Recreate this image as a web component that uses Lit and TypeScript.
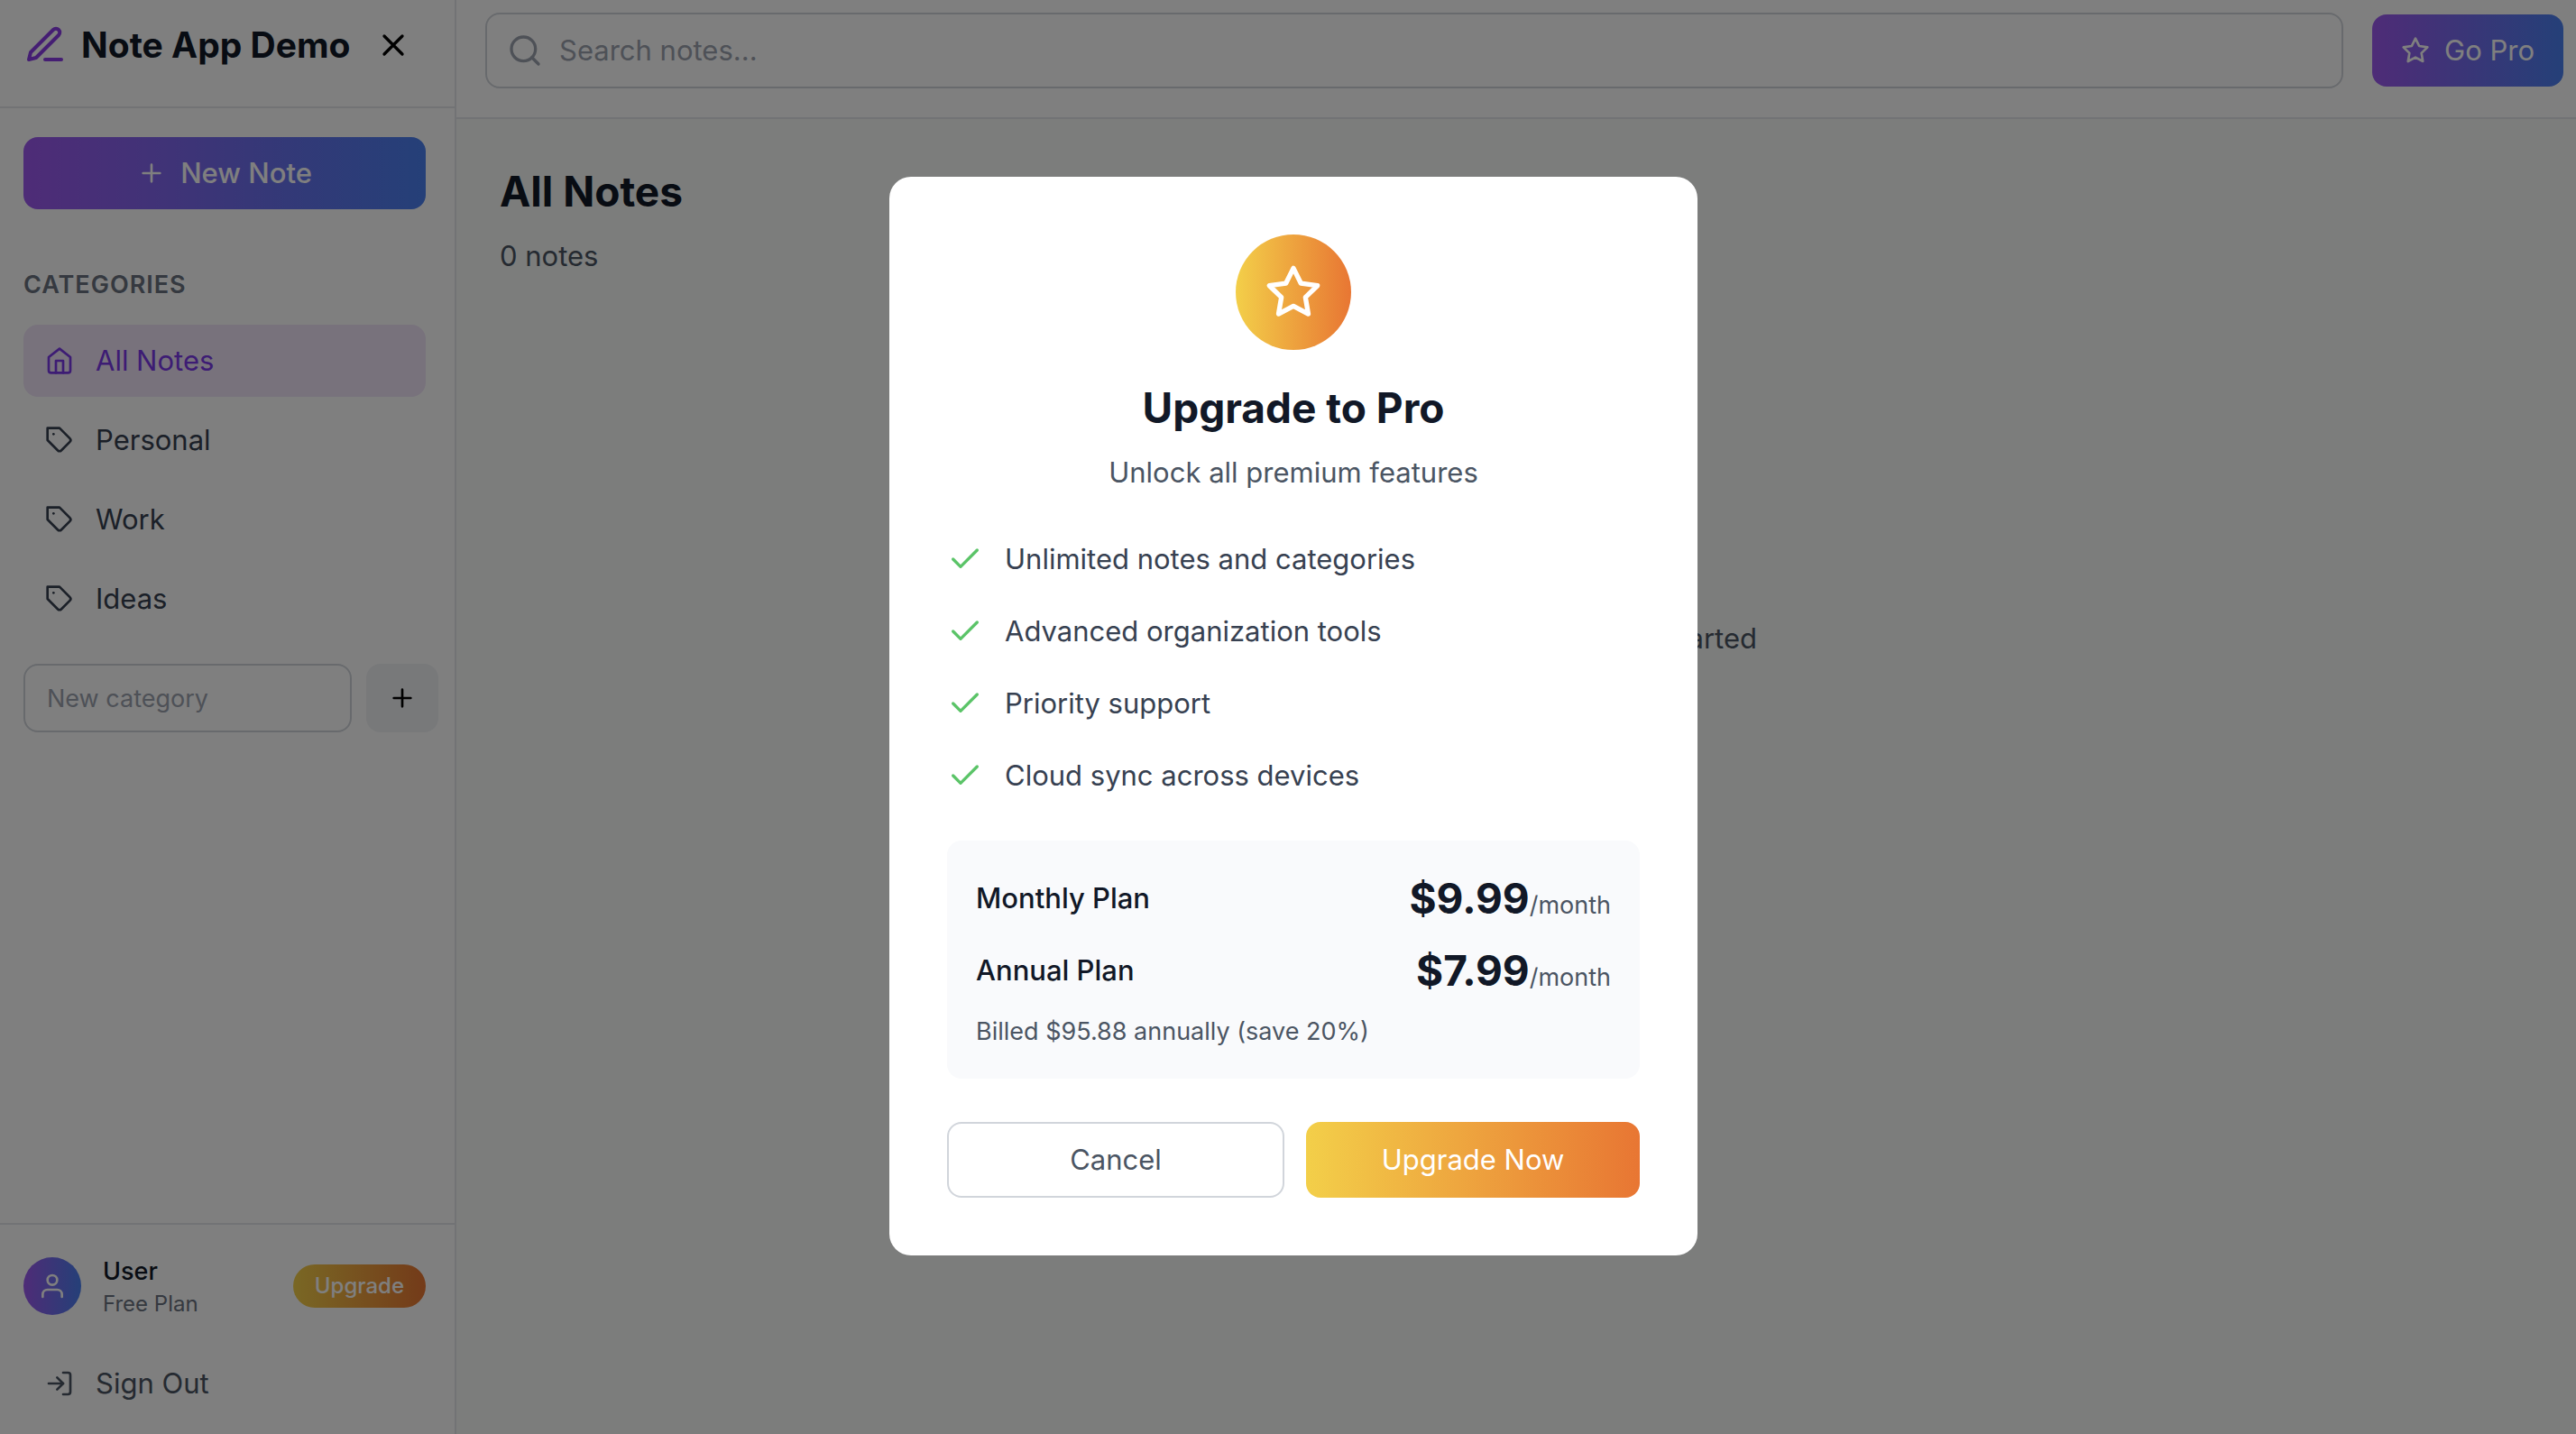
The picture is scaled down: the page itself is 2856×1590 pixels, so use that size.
import { LitElement, html, css, svg } from "lit";
import { customElement, property, state } from "lit/decorators.js";
import { classMap } from "lit/directives/class-map.js";

const ICONS = {
  pen: svg`<path d="M12 20h9"/><path d="M16.5 3.5a2.121 2.121 0 0 1 3 3L7 19l-4 1 1-4L16.5 3.5z"/>`,
  close: svg`<path d="M18 6 6 18M6 6l12 12"/>`,
  plus: svg`<path d="M12 5v14M5 12h14"/>`,
  home: svg`<path d="m3 9 9-7 9 7v11a2 2 0 0 1-2 2H5a2 2 0 0 1-2-2z"/><path d="M9 22V12h6v10"/>`,
  tag: svg`<path d="M20.59 13.41l-7.17 7.17a2 2 0 0 1-2.83 0L2 12V2h10l8.59 8.59a2 2 0 0 1 0 2.82z"/><path d="M7 7h.01"/>`,
  user: svg`<path d="M20 21v-2a4 4 0 0 0-4-4H8a4 4 0 0 0-4 4v2"/><circle cx="12" cy="7" r="4"/>`,
  enter: svg`<path d="M15 3h4a2 2 0 0 1 2 2v14a2 2 0 0 1-2 2h-4"/><path d="m10 17 5-5-5-5"/><path d="M15 12H3"/>`,
  search: svg`<circle cx="11" cy="11" r="8"/><path d="m21 21-4.35-4.35"/>`,
  star: svg`<path d="m12 2 3.09 6.26L22 9.27l-5 4.87 1.18 6.88L12 17.77l-6.18 3.25L7 14.14 2 9.27l6.91-1.01z"/>`,
  check: svg`<path d="M20 6 9 17l-5-5"/>`,
};

type IconName = keyof typeof ICONS;

@customElement("app-icon")
export class AppIcon extends LitElement {
  @property() name: IconName = "plus";

  static styles = css`
    :host {
      display: block;
      flex: none;
      width: 32px;
      height: 32px;
    }
    .glyph {
      display: block;
      width: 100%;
      height: 100%;
      fill: none;
      stroke: currentColor;
      stroke-width: 2;
      stroke-linecap: round;
      stroke-linejoin: round;
    }
  `;

  render() {
    return html`<svg class="glyph" viewBox="0 0 24 24" aria-hidden="true">${ICONS[this.name]}</svg>`;
  }
}

interface Category {
  name: string;
  icon: IconName;
}

interface Plan {
  name: string;
  price: string;
}

@customElement("app-root")
export class AppRoot extends LitElement {
  @state() private active = "All Notes";
  @state() private upgradeOpen = true;

  private categories: Category[] = [
    { name: "All Notes", icon: "home" },
    { name: "Personal", icon: "tag" },
    { name: "Work", icon: "tag" },
    { name: "Ideas", icon: "tag" },
  ];

  private features = [
    "Unlimited notes and categories",
    "Advanced organization tools",
    "Priority support",
    "Cloud sync across devices",
  ];

  private plans: Plan[] = [
    { name: "Monthly Plan", price: "$9.99" },
    { name: "Annual Plan", price: "$7.99" },
  ];

  static styles = css`
    :host {
      display: block;
      --brand: linear-gradient(to right, #9d58ee, #4a80f0);
      --gold: linear-gradient(to right, #f3cf49, #e87633);
      --line: #e5e7eb;
      --ink: #111827;
      font-family: Inter, "Liberation Sans", sans-serif;
      font-size: 31px;
      line-height: 48px;
      color: var(--ink);
    }
    *,
    *::before {
      box-sizing: border-box;
    }
    h1,
    h2,
    h3,
    p,
    ul {
      margin: 0;
      padding: 0;
      list-style: none;
    }
    button,
    input {
      font: inherit;
      color: inherit;
      margin: 0;
      padding: 0;
      border: 0;
      background: none;
    }
    button {
      cursor: pointer;
    }
    input::placeholder {
      color: #9ca3af;
      opacity: 1;
    }

    .layout {
      display: flex;
      min-height: 100vh;
      background: #f8faf9;
    }

    .sidebar {
      display: flex;
      flex-direction: column;
      flex: none;
      width: 506px;
      background: #fff;
      border-right: 2px solid var(--line);
    }
    .brand {
      display: flex;
      align-items: center;
      justify-content: space-between;
      padding: 14px 32px 32px 26px;
      border-bottom: 2px solid var(--line);
    }
    .brand-name {
      display: flex;
      align-items: center;
      gap: 16px;
      font-size: 39px;
      line-height: 56px;
      font-weight: 700;
      white-space: nowrap;
    }
    .brand-icon {
      width: 48px;
      height: 48px;
      color: #8b3ce6;
    }
    .icon-button {
      padding: 16px;
      color: #000;
    }
    .icon-md {
      width: 40px;
      height: 40px;
    }
    .nav {
      flex: 1;
      padding: 32px 32px 32px 26px;
    }
    .new-note {
      display: flex;
      align-items: center;
      justify-content: center;
      gap: 16px;
      width: 100%;
      height: 80px;
      border-radius: 16px;
      background: var(--brand);
      color: #fff;
      font-weight: 500;
    }
    .section-title {
      margin: 64px 0 24px;
      font-size: 27px;
      line-height: 40px;
      font-weight: 600;
      letter-spacing: 1px;
      text-transform: uppercase;
      color: #6b7280;
    }
    .categories {
      display: flex;
      flex-direction: column;
      gap: 8px;
    }
    .row-button {
      display: flex;
      align-items: center;
      gap: 24px;
      width: 100%;
      height: 80px;
      padding: 0 24px;
      border-radius: 16px;
      color: #374151;
      text-align: left;
    }
    .row-button.active {
      background: #f0e4f9;
      color: #7a38e8;
    }
    .row-button.quiet {
      color: #4b5563;
    }
    .add-category {
      display: flex;
      gap: 16px;
      margin-top: 32px;
      font-size: 27px;
      line-height: 40px;
    }
    .category-input {
      flex: none;
      width: 364px;
      height: 76px;
      padding: 0 24px;
      border: 2px solid #d1d5db;
      border-radius: 16px;
    }
    .add-button {
      flex: none;
      padding: 0 24px;
      border-radius: 16px;
      background: #f0f2f5;
      color: #000;
    }
    .account {
      padding: 32px 32px 16px 26px;
      border-top: 2px solid var(--line);
    }
    .profile {
      display: flex;
      align-items: center;
      gap: 24px;
      margin-bottom: 32px;
    }
    .avatar {
      display: grid;
      place-items: center;
      width: 64px;
      height: 64px;
      border-radius: 50%;
      background: var(--brand);
      color: #fff;
    }
    .who {
      flex: 1;
    }
    .who-name {
      font-size: 27px;
      line-height: 40px;
      font-weight: 500;
    }
    .who-plan {
      font-size: 24px;
      line-height: 32px;
      color: #6b7280;
    }
    .pill {
      padding: 8px 24px;
      border-radius: 24px;
      background: var(--gold);
      color: #fff;
      font-size: 24px;
      line-height: 32px;
      font-weight: 500;
    }

    .main {
      flex: 1;
      min-width: 0;
      display: flex;
      flex-direction: column;
    }
    .topbar {
      display: flex;
      align-items: center;
      gap: 32px;
      padding: 14px 14px 32px 32px;
      background: #fff;
      border-bottom: 2px solid var(--line);
    }
    .search {
      display: flex;
      align-items: center;
      gap: 18px;
      flex: 1;
      height: 84px;
      padding: 0 22px;
      border: 2px solid #d1d5db;
      border-radius: 16px;
    }
    .search-icon {
      width: 40px;
      height: 40px;
      color: #9ca3af;
    }
    .search-input {
      flex: 1;
      min-width: 0;
      outline: none;
    }
    .go-pro {
      display: flex;
      align-items: center;
      gap: 16px;
      height: 80px;
      padding: 0 32px;
      border-radius: 16px;
      background: var(--brand);
      color: #fff;
      white-space: nowrap;
    }
    .content {
      flex: 1;
      padding: 48px 30px 48px 48px;
    }
    .page-title {
      font-size: 46px;
      line-height: 64px;
      font-weight: 700;
    }
    .muted {
      margin-top: 16px;
      color: #4b5563;
    }
    .empty {
      padding-top: 376px;
      text-align: center;
      color: #4b5563;
    }

    .overlay {
      position: fixed;
      inset: 0;
      display: grid;
      place-items: center;
      padding: 0 0 2px 12px;
      background: rgba(0, 0, 0, 0.5);
    }
    .dialog {
      width: 896px;
      max-width: 100%;
      padding: 64px;
      border-radius: 24px;
      background: #fff;
    }
    .dialog-head {
      display: flex;
      flex-direction: column;
      align-items: center;
      text-align: center;
    }
    .badge {
      display: grid;
      place-items: center;
      width: 128px;
      height: 128px;
      margin-bottom: 32px;
      border-radius: 50%;
      background: var(--gold);
      color: #fff;
    }
    .badge-icon {
      width: 64px;
      height: 64px;
    }
    .features {
      display: flex;
      flex-direction: column;
      gap: 32px;
      margin: 48px 0;
      color: #374151;
    }
    .feature {
      display: flex;
      align-items: center;
      gap: 24px;
    }
    .tick {
      color: #5bc468;
    }
    .plans {
      display: flex;
      flex-direction: column;
      gap: 16px;
      padding: 32px;
      border-radius: 16px;
      background: #f9fafc;
    }
    .plan {
      display: flex;
      align-items: center;
      justify-content: space-between;
    }
    .plan-name {
      font-weight: 500;
    }
    .price {
      font-size: 46px;
      line-height: 64px;
      font-weight: 700;
    }
    .note {
      font-size: 27px;
      line-height: 40px;
      font-weight: 400;
      color: #4b5563;
    }
    .actions {
      display: flex;
      gap: 24px;
      margin-top: 48px;
    }
    .action {
      flex: 1;
      height: 84px;
      border-radius: 16px;
    }
    .cancel {
      border: 2px solid #d1d5db;
      color: #4b5563;
    }
    .confirm {
      background: var(--gold);
      color: #fff;
    }
  `;

  private closeUpgrade() {
    this.upgradeOpen = false;
  }

  private openUpgrade() {
    this.upgradeOpen = true;
  }

  private renderSidebar() {
    return html`
      <aside class="sidebar">
        <header class="brand">
          <div class="brand-name">
            <app-icon class="brand-icon" name="pen"></app-icon>
            <span>Note App Demo</span>
          </div>
          <button class="icon-button" aria-label="Close sidebar">
            <app-icon class="icon-md" name="close"></app-icon>
          </button>
        </header>
        <nav class="nav">
          <button class="new-note">
            <app-icon name="plus"></app-icon>
            <span>New Note</span>
          </button>
          <h3 class="section-title">Categories</h3>
          <ul class="categories">
            ${this.categories.map(
              (c) => html`
                <li>
                  <button
                    class=${classMap({ "row-button": true, active: c.name === this.active })}
                    @click=${() => (this.active = c.name)}
                  >
                    <app-icon name=${c.icon}></app-icon>
                    <span>${c.name}</span>
                  </button>
                </li>
              `
            )}
          </ul>
          <div class="add-category">
            <input class="category-input" type="text" placeholder="New category" aria-label="New category" />
            <button class="add-button" aria-label="Add category">
              <app-icon name="plus"></app-icon>
            </button>
          </div>
        </nav>
        <footer class="account">
          <div class="profile">
            <div class="avatar"><app-icon name="user"></app-icon></div>
            <div class="who">
              <p class="who-name">User</p>
              <p class="who-plan">Free Plan</p>
            </div>
            <button class="pill" @click=${this.openUpgrade}>Upgrade</button>
          </div>
          <button class="row-button quiet">
            <app-icon name="enter"></app-icon>
            <span>Sign Out</span>
          </button>
        </footer>
      </aside>
    `;
  }

  private renderMain() {
    return html`
      <main class="main">
        <header class="topbar">
          <div class="search">
            <app-icon class="search-icon" name="search"></app-icon>
            <input class="search-input" type="text" placeholder="Search notes..." aria-label="Search notes" />
          </div>
          <button class="go-pro" @click=${this.openUpgrade}>
            <app-icon name="star"></app-icon>
            <span>Go Pro</span>
          </button>
        </header>
        <section class="content">
          <h1 class="page-title">${this.active}</h1>
          <p class="muted">0 notes</p>
          <p class="empty">Create your first note to get started</p>
        </section>
      </main>
    `;
  }

  private renderDialog() {
    return html`
      <div class="overlay">
        <section class="dialog" role="dialog" aria-modal="true" aria-labelledby="upgrade-title">
          <div class="dialog-head">
            <div class="badge"><app-icon class="badge-icon" name="star"></app-icon></div>
            <h2 class="page-title" id="upgrade-title">Upgrade to Pro</h2>
            <p class="muted">Unlock all premium features</p>
          </div>
          <ul class="features">
            ${this.features.map(
              (f) => html`
                <li class="feature">
                  <app-icon class="icon-md tick" name="check"></app-icon>
                  <span>${f}</span>
                </li>
              `
            )}
          </ul>
          <div class="plans">
            ${this.plans.map(
              (p) => html`
                <div class="plan">
                  <span class="plan-name">${p.name}</span>
                  <span class="price">${p.price}<span class="note">/month</span></span>
                </div>
              `
            )}
            <p class="note">Billed $95.88 annually (save 20%)</p>
          </div>
          <div class="actions">
            <button class="action cancel" @click=${this.closeUpgrade}>Cancel</button>
            <button class="action confirm" @click=${this.closeUpgrade}>Upgrade Now</button>
          </div>
        </section>
      </div>
    `;
  }

  render() {
    return html`
      <div class="layout">${this.renderSidebar()} ${this.renderMain()}</div>
      ${this.upgradeOpen ? this.renderDialog() : null}
    `;
  }
}
